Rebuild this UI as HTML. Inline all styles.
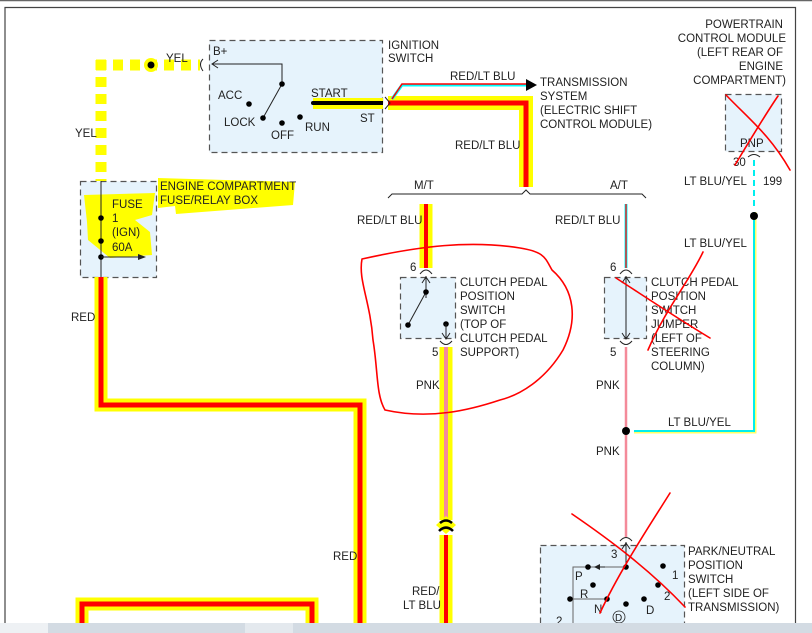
<!DOCTYPE html>
<html><head><meta charset="utf-8"><style>
html,body{margin:0;padding:0;background:#fff;width:812px;height:633px;overflow:hidden}
svg{display:block}
text{font-family:"Liberation Sans",Arial,sans-serif;font-size:11.5px;fill:#222}
</style></head><body>
<svg width="812" height="633" viewBox="0 0 812 633" xmlns="http://www.w3.org/2000/svg">
<rect x="0" y="0" width="812" height="633" fill="#fff"/>
<line x1="0" y1="0.5" x2="812" y2="0.5" stroke="#666" stroke-width="1.5"/>
<polyline points="5,633 5,7.5 795.5,7.5 795.5,633" fill="none" stroke="#444" stroke-width="1.2"/>

<g fill="#e6f3fc" stroke="#555" stroke-width="1.2" stroke-dasharray="6,4">
<rect x="209.5" y="40.5" width="173" height="112"/>
<rect x="80.5" y="181.5" width="76" height="96"/>
<rect x="400.5" y="277.5" width="55" height="61"/>
<rect x="604.5" y="277.5" width="42" height="61"/>
<rect x="725.5" y="94.5" width="56" height="57"/>
<rect x="540.5" y="545.5" width="144" height="90"/>
</g>

<g fill="#ffff00">
<path d="M158,178 L295,182 L293,205 L176,214 L175,206 L158,208 Z"/>
<path d="M84,195 L155,193 L152,215 L135,220 L150,232 L152,255 L110,258 L88,240 L87,222 Z"/>
<rect x="313" y="98" width="70" height="11"/>
</g>
<g stroke="#ffff00" stroke-width="11" fill="none">
<path d="M96,65 H200" stroke-dasharray="10,7"/>
<path d="M101,60 V181" stroke-dasharray="10,7"/>
</g>
<circle cx="151" cy="65" r="7" fill="#ffff00"/>
<circle cx="151" cy="65" r="3.5" fill="#000"/>
<text x="166" y="62">YEL</text>
<text x="75" y="137">YEL</text>
<path d="M203,59 Q198,64 203,71" fill="none" stroke="#222"/>

<text x="213" y="55">B+</text>
<path d="M212,64 H282 V84" fill="none" stroke="#222"/>
<path d="M218,60 L212,64 L218,68" fill="none" stroke="#222"/>
<line x1="282" y1="84" x2="263" y2="118" stroke="#222"/>
<g fill="#000">
<circle cx="282" cy="84" r="2.8"/><circle cx="263" cy="118" r="2.8"/>
<circle cx="249" cy="104" r="2.8"/><circle cx="282" cy="123" r="2.8"/><circle cx="300" cy="117" r="2.8"/>
<circle cx="313" cy="103" r="2"/>
</g>
<text x="218" y="99">ACC</text>
<text x="224" y="126">LOCK</text>
<text x="271" y="139">OFF</text>
<text x="305" y="131">RUN</text>
<text x="311" y="97">START</text>
<text x="360" y="122">ST</text>
<line x1="313" y1="103" x2="383" y2="103" stroke="#000" stroke-width="4"/>
<text x="388" y="49">IGNITION</text>
<text x="388" y="62">SWITCH</text>

<line x1="101" y1="181" x2="101" y2="277" stroke="#222"/>
<g fill="#000"><circle cx="101" cy="218" r="2.8"/><circle cx="101" cy="241" r="2.8"/><circle cx="101" cy="257" r="2.8"/></g>
<path d="M101,257 H140" stroke="#222"/><path d="M138,254 L146,257 L138,260 Z" fill="#222"/>
<text x="112" y="208">FUSE</text><text x="112" y="222">1</text><text x="112" y="236">(IGN)</text><text x="112" y="251">60A</text>
<text x="160" y="190">ENGINE COMPARTMENT</text>
<text x="160" y="204">FUSE/RELAY BOX</text>

<g fill="none" stroke-linejoin="miter">
<path d="M101,277 V405 H360 V640" stroke="#ffff00" stroke-width="13"/>
<path d="M101,277 V405 H360 V640" stroke="#f00" stroke-width="5"/>
<path d="M82,640 V604 H312 V640" stroke="#ffff00" stroke-width="13"/>
<path d="M82,640 V604 H312 V640" stroke="#f00" stroke-width="5"/>
<path d="M388,103 H526 V187" stroke="#ffff00" stroke-width="14"/>
<path d="M388,103 H526 V187" stroke="#f00" stroke-width="5"/>
</g>
<text x="71" y="321">RED</text>
<text x="333" y="560">RED</text>
<path d="M385,97 L390,103 L385,109" fill="none" stroke="#222"/>

<path d="M392,99 L402,85 H527" fill="none" stroke="#0ff" stroke-width="3"/>
<path d="M392,99 L402,84 H527" fill="none" stroke="#f00" stroke-width="1.5"/>
<path d="M526,79 L537,85 L526,91 Z" fill="#000"/>
<text x="450" y="80">RED/LT BLU</text>
<text x="540" y="86">TRANSMISSION</text>
<text x="540" y="100">SYSTEM</text>
<text x="540" y="114">(ELECTRIC SHIFT</text>
<text x="540" y="128">CONTROL MODULE)</text>
<text x="455" y="149">RED/LT BLU</text>

<path d="M388,198 L392,194 H522 L526,190 L530,194 H642 L646,198" fill="none" stroke="#222"/>
<text x="414" y="189">M/T</text>
<text x="610" y="189">A/T</text>

<path d="M426,204 V268" stroke="#ffff00" stroke-width="13"/>
<path d="M426,204 V268" stroke="#f00" stroke-width="4"/>
<text x="357" y="224">RED/LT BLU</text>
<text x="410" y="271">6</text>
<path d="M420,274 Q426,266 432,274" fill="none" stroke="#222"/>
<path d="M426,276 V298" stroke="#222"/><path d="M422,283 L426,277 L430,283" fill="none" stroke="#222"/>
<line x1="426" y1="292" x2="408" y2="325" stroke="#222"/>
<g fill="#000"><circle cx="426" cy="292" r="2.8"/><circle cx="408" cy="325" r="2.8"/><circle cx="446" cy="324" r="2.8"/></g>
<path d="M446,324 V338" stroke="#222"/><path d="M442,333 L446,339 L450,333" fill="none" stroke="#222"/>
<path d="M440,341 Q446,348 452,341" fill="none" stroke="#222"/>
<text x="432" y="356">5</text>
<text x="460" y="286">CLUTCH PEDAL</text>
<text x="460" y="300">POSITION</text>
<text x="460" y="314">SWITCH</text>
<text x="460" y="328">(TOP OF</text>
<text x="460" y="342">CLUTCH PEDAL</text>
<text x="460" y="356">SUPPORT)</text>

<path d="M446,347 V520" stroke="#ffff00" stroke-width="13"/>
<path d="M446,347 V520" stroke="#f48a9a" stroke-width="4"/>
<path d="M446,535 V640" stroke="#ffff00" stroke-width="13"/>
<path d="M446,535 V640" stroke="#f00" stroke-width="4"/>
<path d="M436,525 L446,516 L456,525 L446,534 Z" fill="#ffff00"/>
<path d="M440,523 Q446,518 452,523" stroke="#000" stroke-width="2.5" fill="none"/>
<path d="M439,531 Q446,524 453,531" stroke="#000" stroke-width="2.5" fill="none"/>
<text x="416" y="389">PNK</text>
<text x="412" y="595">RED/</text>
<text x="403" y="609">LT BLU</text>

<path d="M626,204 V268" stroke="#0ff" stroke-width="3"/>
<path d="M626,204 V268" stroke="#f00" stroke-width="1.3"/>
<text x="555" y="224">RED/LT BLU</text>
<text x="610" y="271">6</text>
<path d="M620,274 Q626,266 632,274" fill="none" stroke="#222"/>
<path d="M626,276 V338" stroke="#222"/>
<path d="M622,283 L626,277 L630,283" fill="none" stroke="#222"/>
<path d="M622,333 L626,339 L630,333" fill="none" stroke="#222"/>
<path d="M620,341 Q626,348 632,341" fill="none" stroke="#222"/>
<text x="610" y="356">5</text>
<text x="651" y="286">CLUTCH PEDAL</text>
<text x="651" y="300">POSITION</text>
<text x="651" y="314">SWITCH</text>
<text x="651" y="328">JUMPER</text>
<text x="651" y="342">(LEFT OF</text>
<text x="651" y="356">STEERING</text>
<text x="651" y="370">COLUMN)</text>
<path d="M626,347 V537" stroke="#f48a9a" stroke-width="2.5"/>
<circle cx="626" cy="431" r="4" fill="#000"/>
<text x="596" y="389">PNK</text>
<text x="596" y="455">PNK</text>
<path d="M634,432 H755 V212" fill="none" stroke="#ffff66" stroke-width="3"/>
<path d="M634,431 H754 V212" fill="none" stroke="#0ee" stroke-width="2"/>
<path d="M754,160 V210" stroke="#0ee" stroke-width="2" stroke-dasharray="6,4"/>
<circle cx="754" cy="216" r="4" fill="#000"/>
<text x="668" y="426">LT BLU/YEL</text>
<text x="684" y="185">LT BLU/YEL</text>
<text x="763" y="185">199</text>
<text x="684" y="247">LT BLU/YEL</text>

<g text-anchor="end">
<text x="783" y="28">POWERTRAIN</text>
<text x="786" y="42">CONTROL MODULE</text>
<text x="783" y="56">(LEFT REAR OF</text>
<text x="783" y="70">ENGINE</text>
<text x="786" y="84">COMPARTMENT)</text>
</g>
<text x="740" y="147">PNP</text>
<text x="733" y="166">30</text>
<path d="M748,157 Q754,152 760,157" fill="none" stroke="#222"/>

<path d="M620,541 Q626,534 632,541" fill="none" stroke="#222"/>
<path d="M626,542 V567" stroke="#222"/><path d="M622,549 L626,543 L630,549" fill="none" stroke="#222"/>
<text x="611" y="558">3</text>
<path d="M626,567 H573 V600 M573,599 H609 M573,599 V633" fill="none" stroke="#666"/>
<path d="M605,567 L597,567" stroke="#222"/><path d="M600,564 L594,567 L600,570 Z" fill="#222"/>
<g fill="#000">
<circle cx="626" cy="567" r="2.8"/><circle cx="588" cy="567" r="2.8"/><circle cx="663" cy="566" r="2.8"/>
<circle cx="593" cy="585" r="2.8"/><circle cx="658" cy="585" r="2.8"/><circle cx="570" cy="599" r="2.8"/>
<circle cx="607" cy="599" r="2.8"/><circle cx="626" cy="604" r="2.8"/><circle cx="644" cy="599" r="2.8"/>
</g>
<text x="575" y="580">P</text><text x="580" y="598">R</text><text x="594" y="613">N</text>
<text x="646" y="614">D</text><text x="672" y="579">1</text><text x="664" y="600">2</text>
<circle cx="619" cy="617" r="6" fill="none" stroke="#222" stroke-width="0.8"/>
<text x="615" y="621" style="font-size:10px">D</text>
<text x="556" y="625">2</text>
<text x="688" y="555">PARK/NEUTRAL</text>
<text x="688" y="569">POSITION</text>
<text x="688" y="583">SWITCH</text>
<text x="688" y="597">(LEFT SIDE OF</text>
<text x="688" y="611">TRANSMISSION)</text>

<g fill="none" stroke="#f00" stroke-width="1.6" stroke-linecap="round">
<path d="M362,259 C420,246 470,240 520,248 C545,252 545,258 552,270 C575,290 578,320 563,350 C545,380 520,395 500,400 C470,410 430,420 385,410 C376,395 378,370 373,340 C370,300 358,280 362,259"/>
<path d="M726,95 C750,120 770,135 790,170"/>
<path d="M778,96 C765,115 750,140 735,165"/>
<path d="M616,278 C650,300 680,320 710,338"/>
<path d="M703,252 C690,280 665,310 648,350"/>
<path d="M572,514 C610,540 650,570 685,607"/>
<path d="M670,493 C650,525 620,570 600,613"/>
</g>

<rect x="0" y="623" width="812" height="10" fill="#d3dbe3"/>
<rect x="0" y="623" width="48" height="10" fill="#eef1f4"/>
<rect x="245" y="623" width="48" height="10" fill="#e4e9ee"/>
</svg>
</body></html>
